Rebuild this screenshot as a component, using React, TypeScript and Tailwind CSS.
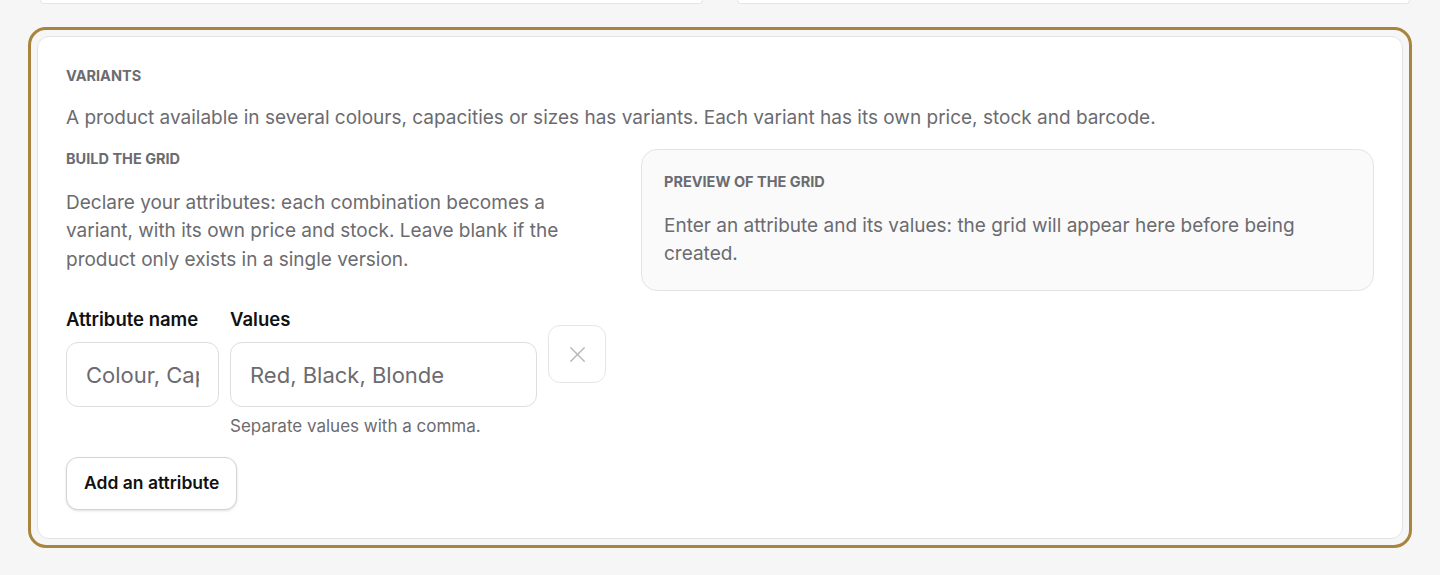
import { X } from 'lucide-react'

export default function App() {
  return (
    <div className="min-h-[575px] bg-[#f6f6f7] font-['Inter',sans-serif] overflow-hidden">
      {/* cards from the section above, only their bottom edge shows */}
      <div className="grid grid-cols-[663px_673px] gap-[34px] pl-[40px]">
        <div className="h-[4px] bg-white border-x border-b border-[#e6e6e8] rounded-b-xl" />
        <div className="h-[4px] bg-white border-x border-b border-[#e6e6e8] rounded-b-xl" />
      </div>

      <div className="mx-[28px] mt-[23px] border-[3px] border-[#a8843f] rounded-[18px] p-[6px]">
        <div className="bg-white border border-[#e4e4e7] rounded-xl px-[28px] pt-[29px] pb-[28px]">
          <h2 className="text-[14.5px] font-bold uppercase text-[#6b6b70] leading-5">Variants</h2>
          <p className="mt-[18px] text-[19px] leading-[28.5px] text-[#6b6b70]">
            A product available in several colours, capacities or sizes has variants. Each variant has its own price, stock and barcode.
          </p>

          <div className="mt-[16px] grid grid-cols-[543px_1fr] gap-[32px] items-start">
            {/* Build the grid */}
            <div>
              <h3 className="text-[14.5px] font-bold uppercase text-[#6b6b70] leading-5">Build the grid</h3>
              <p className="mt-[20px] text-[19px] leading-[28.5px] text-[#6b6b70]">
                Declare your attributes: each combination becomes a variant, with its own price and stock. Leave blank if the product only exists in a single version.
              </p>

              <div className="mt-[33px] flex items-start gap-[11px]">
                <div className="w-[153px]">
                  <label className="block text-[18.5px] font-semibold text-[#111] leading-6">Attribute name</label>
                  <input
                    placeholder="Colour, Capacity, Size"
                    className="mt-[11px] w-full h-[65px] rounded-xl border border-[#dedee2] bg-white px-[19px] text-[22px] text-[#111] placeholder:text-[#6b6b70] outline-none"
                  />
                </div>
                <div className="w-[307px]">
                  <label className="block text-[18.5px] font-semibold text-[#111] leading-6">Values</label>
                  <input
                    placeholder="Red, Black, Blonde"
                    className="mt-[11px] w-full h-[65px] rounded-xl border border-[#dedee2] bg-white px-[19px] text-[22px] text-[#111] placeholder:text-[#6b6b70] outline-none"
                  />
                  <p className="mt-[7px] text-[17px] leading-6 text-[#6b6b70]">Separate values with a comma.</p>
                </div>
                <button className="mt-[18px] w-[58px] h-[58px] rounded-xl border border-[#e6e6e8] bg-white flex items-center justify-center">
                  <X className="w-[27px] h-[27px] text-[#b4b4b8]" strokeWidth={1.2} />
                </button>
              </div>

              <button className="mt-[19px] h-[53px] px-[17px] rounded-xl border border-[#d4d4d8] bg-white text-[17.5px] font-semibold text-[#111] shadow-sm">
                Add an attribute
              </button>
            </div>

            {/* Preview */}
            <div className="rounded-2xl border border-[#e4e4e7] bg-[#fafafa] px-[22px] pt-[22px] pb-[21px]">
              <h3 className="text-[14.5px] font-bold uppercase text-[#6b6b70] leading-5">Preview of the grid</h3>
              <p className="mt-[20px] text-[19px] leading-[28.5px] text-[#6b6b70]">
                Enter an attribute and its values: the grid will appear here before being created.
              </p>
            </div>
          </div>
        </div>
      </div>
    </div>
  )
}
